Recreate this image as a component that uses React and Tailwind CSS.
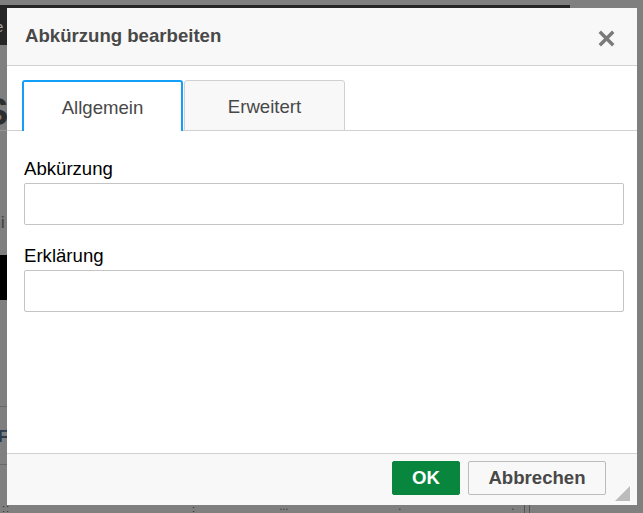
import React from "react";

function CloseIcon() {
  return (
    <svg width="17" height="17" viewBox="0 0 17 17" className="mt-[4px]">
      <path d="M3 3 L14 14 M14 3 L3 14" stroke="#7a7a7a" strokeWidth="3.4" strokeLinecap="square" fill="none" />
    </svg>
  );
}

function Backdrop() {
  return (
    <div className="flex flex-col">
      <div className="h-[5px]" />
      <div className="h-[40px] w-[570px] bg-[#262626] pt-[14px] text-[15px] leading-none text-[#a3a3a3]">
        <span className="-ml-[5px]">e</span>
      </div>
      <div className="h-[50px]" />
      <div className="h-[35px] text-[38px] font-bold leading-[35px] text-[#2e2e2e]">
        <span className="-ml-[17px]">S</span>
      </div>
      <div className="h-px w-[200px] bg-[#959595]" />
      <div className="h-[84px]" />
      <div className="h-[40px] text-[16px] leading-[16px] text-[#3a3a3a]">
        <span className="-ml-[8px]">ni</span>
      </div>
      <div className="h-[45px] w-[200px] bg-black" />
      <div className="h-[106px]" />
      <div className="h-px w-[200px] bg-[#686868]" />
      <div className="h-[57px] pt-[21px] text-[17px] font-bold leading-[17px] text-[#2c3b4c]">
        <span className="-ml-[2px]">F</span>
      </div>
      <div className="h-px w-[200px] bg-[#686868]" />
      <div className="h-[38px]" />
      <div className="flex h-[10px] text-[11px] leading-[10px] text-[#333]">
        <span className="ml-[2px] tracking-[1px]">::</span>
        <span className="ml-[178px]">⋮</span>
        <span className="ml-[80px]">∙∙∙</span>
        <span className="ml-[110px]">∙</span>
        <span className="ml-[110px]">∙</span>
        <div className="ml-[10px] h-full w-px bg-[#555]" />
        <div className="ml-[4px] h-full w-px bg-[#555]" />
      </div>
    </div>
  );
}

export default function App() {
  return (
    <div className="relative h-[513px] w-[643px] overflow-hidden bg-[#7f7f7f] font-['Liberation_Sans',Arial,sans-serif]">
      <Backdrop />

      <div className="absolute left-[7px] top-[8px] flex h-[497px] w-[630px] flex-col bg-white">
        {/* Title bar */}
        <div className="flex h-[58px] shrink-0 items-center justify-between border-b border-[#d1d1d1] bg-[#f8f8f8] pl-[18px] pr-[22px]">
          <span className="text-[18.6px] font-bold leading-none text-[#484848]">Abkürzung bearbeiten</span>
          <CloseIcon />
        </div>

        {/* Tabs */}
        <div className="flex h-[65px] shrink-0 items-end border-b border-[#d1d1d1] pl-[15px]">
          <div className="-mb-px flex h-[51px] w-[161px] items-center justify-center rounded-t-[3px] border-2 border-b-0 border-[#139ff7] bg-white pt-[3px] text-[18.6px] leading-none text-[#484848]">
            Allgemein
          </div>
          <div className="-mb-px ml-px flex h-[51px] w-[161px] items-center justify-center rounded-t-[3px] border border-[#d1d1d1] bg-[#f8f8f8] pt-[3px] text-[18.6px] leading-none text-[#484848]">
            Erweitert
          </div>
        </div>

        {/* Content */}
        <div className="flex flex-1 flex-col pl-[17px] pr-[13px] pt-[28px]">
          <label className="h-[19px] text-[18.6px] leading-[19px] text-black">Abkürzung</label>
          <div className="mt-[5px] h-[42px] rounded-[2px] border border-[#c4c4c4] bg-white" />
          <label className="mt-[21px] h-[19px] text-[18.6px] leading-[19px] text-black">Erklärung</label>
          <div className="mt-[5px] h-[42px] rounded-[2px] border border-[#c4c4c4] bg-white" />
        </div>

        {/* Footer */}
        <div className="relative flex h-[52px] shrink-0 justify-end gap-[8px] border-t border-[#d1d1d1] bg-[#f8f8f8] pr-[31px] pt-[7px]">
          <button className="flex h-[34px] w-[68px] items-center justify-center rounded-[2px] border border-[#09863e] bg-[#09863e] pt-px text-[18.6px] font-bold leading-none text-white">
            OK
          </button>
          <button className="flex h-[34px] w-[138px] items-center justify-center rounded-[2px] border border-[#bcbcbc] bg-[#f8f8f8] pt-px text-[18.6px] font-bold leading-none text-[#484848]">
            Abbrechen
          </button>
          <svg width="15" height="15" viewBox="0 0 15 15" className="absolute bottom-[4px] right-[7px]">
            <polygon points="15,0 15,15 0,15" fill="#bcbcbc" />
          </svg>
        </div>
      </div>
    </div>
  );
}
